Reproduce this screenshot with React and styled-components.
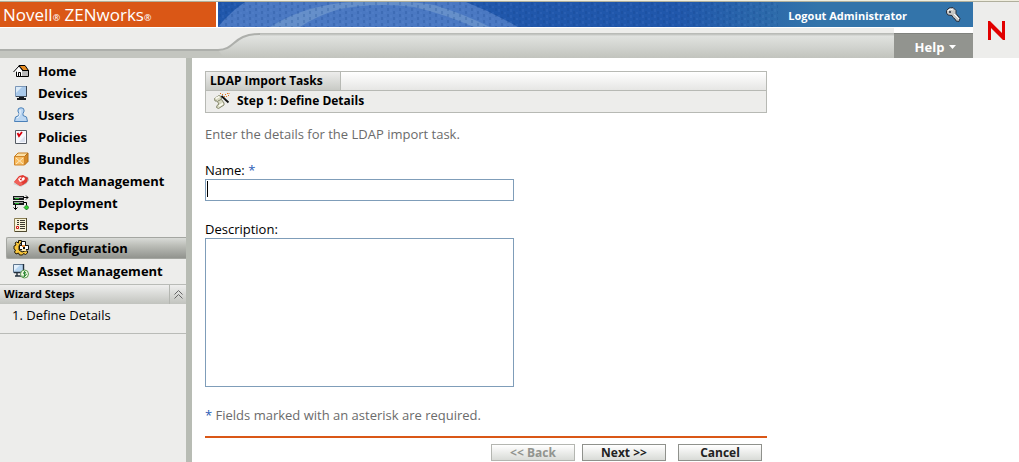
import React from "react";
import { useState } from "react";
import styled, { createGlobalStyle } from "styled-components";

const HomeIcon = () => (
  <Icon viewBox="0 0 16 16">
    <path d="M3.500 7.500h12v6h-12z" fill="#fff" stroke="#000" />
    <path d="M9 8h6v5H9z" fill="#b9b9b9" />
    <path d="M6 2.500h6l3.500 5H10z" fill="#e68a1e" stroke="#000" />
    <path d="M.500 9L6 3l4 5" fill="#fff" stroke="#000" />
    <path d="M5.500 9.500h2v4h-2z" fill="#fff" stroke="#000" />
  </Icon>
);

const DeviceIcon = () => (
  <Icon viewBox="0 0 16 16">
    <path d="M2.500 1.500h11v10h-11z" fill="#a9c9ea" stroke="#7b97b8" />
    <path d="M3 2h6L3 8z" fill="#dcebf8" />
    <path d="M13.500 1v10.500H3" fill="none" stroke="#3b4653" />
    <path d="M6 12h5v1h2v2H4v-2h2z" fill="#15191f" />
  </Icon>
);

const UserIcon = () => (
  <Icon viewBox="0 0 16 16">
    <path d="M5.500 1.500Q8 0 10.500 1.500Q12 4 10 6.500v2l3.500 1.500 1 4.500h-13L2.500 10 6 8.500v-2Q4 4 5.500 1.500z" fill="#bcd7f2" stroke="#4a80b8" />
    <path d="M7 3v4L6 9.500 4 11" fill="none" stroke="#f3f9ff" />
  </Icon>
);

const PolicyIcon = () => (
  <Icon viewBox="0 0 16 16">
    <path d="M2.500 1.500h11v13h-11z" fill="#f7f8fc" stroke="#555b63" />
    <path d="M6 13l6-6v6z" fill="#dce2ef" />
    <path d="M4.500 4l1.500 3L9 3" fill="none" stroke="#d8000c" strokeWidth="1.800" />
  </Icon>
);

const BundleIcon = () => (
  <Icon viewBox="0 0 16 16">
    <path d="M1.500 5.500L5 2h10l-3.500 3.500z" fill="#fbe0a6" stroke="#c87e20" />
    <path d="M11.500 5.500L15 2v8.500L11.500 14z" fill="#d68a27" stroke="#b06c16" />
    <path d="M1.500 5.500h10v8.500h-10z" fill="#f8bd62" stroke="#d0852a" />
    <path d="M3 7l3.500 3L10 7M3 13l3.500-3 3.500 3" fill="none" stroke="#fdebc8" />
  </Icon>
);

const PatchIcon = () => (
  <Icon viewBox="0 0 16 16">
    <path d="M0 11l3-2 8 3-3 2z" fill="#d0d0d0" />
    <path d="M11 3l4 1 1 3-3 4-3 1z" fill="#b9b3b1" />
    <path d="M1 9l5-6 4-1 5 3-1 4-4 3-3 1z" fill="#e23a32" />
    <path d="M1 9l4-3 5 5-3 2z" fill="#f0625a" />
    <path d="M5 6l2-2 2 1 2-1 1 2-2 2-3 1z" fill="#fff" />
    <path d="M7 5.500l2 2M9 5.500l-2 1.500" stroke="#d91b16" />
  </Icon>
);

const DeployIcon = () => (
  <Icon viewBox="0 0 16 16">
    <path d="M0 1h11v4H0zM0 6h11v4H0z" fill="#15181a" />
    <path d="M1 2.500h9M1 7.500h9" stroke="#a5aaa7" />
    <path d="M2 3.500h4M2 8.500h4" stroke="#24b32d" />
    <path d="M11 2.500h4M13 .500l2 2-2 2M11 7.500h2.500V10M2.500 10v4.500M.500 12.500l2 2 2-2" fill="none" stroke="#000" />
    <path d="M13.500 10l2.500 2.500-2.500 2.500-2.500-2.500z" fill="#31d334" stroke="#07570a" strokeWidth="0.7" />
  </Icon>
);

const ReportIcon = () => (
  <Icon viewBox="0 0 16 16">
    <path d="M1.500 1.500h12v13h-12z" fill="#f7f3d9" stroke="#8a7e52" />
    <path d="M13.500 1v13.500H2" fill="none" stroke="#4e482f" />
    <path d="M4 3.500h2M4 5.500h2M4 7.500h2M7 3.500h5M7 5.500h5M7 7.500h5M7 9.500h5M7 11.500h5" stroke="#3d3a31" />
    <path d="M3.500 9.500h2v2h-2z" fill="#fff" stroke="#d11515" />
  </Icon>
);

const ConfigIcon = () => (
  <Icon viewBox="0 0 16 16">
    <path d="M5.500.500h3v2H8L6 6v4l3 2 3-1h2.500v2l-2 1.500-2-1-1 1.500h-3l-1-2-2.500 1-1.500-2 1-2-1.500-1V6L3 5 2 3l1.500-1 2 1z" fill="#f8c63d" stroke="#241b06" />
    <path d="M8.500 1.500h4v4h-4zM11.500 5.500h4v4h-4z" fill="#fff" stroke="#111" />
    <path d="M6.500 5.500h4v4h-4z" fill="#fff" stroke="#111" />
    <path d="M9 5h3v2H9z" fill="#e8903a" />
    <path d="M9 9h4v2H9z" fill="#fbe6a8" />
  </Icon>
);

const AssetIcon = () => (
  <Icon viewBox="0 0 16 16">
    <path d="M.500 1.500h10v8H.500z" fill="#b6d5f1" stroke="#60768d" />
    <path d="M1 2h6L1 8z" fill="#e3f0fb" />
    <path d="M10.500 1v8.500H1M4 10v3H2M4 13h4" fill="none" stroke="#222f3c" strokeWidth="1.400" />
    <circle cx="11.500" cy="11" r="4" fill="#f1f8e4" stroke="#5b9a50" />
    <path d="M13 9.500q-2.500-1-2.500.500t2 1-.500 2-2-.500M11.500 8v6" fill="none" stroke="#2f8a37" />
  </Icon>
);

const WandIcon = () => (
  <Icon viewBox="0 0 16 16">
    <path d="M.500 5.500L5 2.500l2 1 .500 3 2.500 3.500v2L4.500 15.500l-2-1 .500-2 2-1.500L3 8H1z" fill="#d9dac4" stroke="#85876c" />
    <path d="M1.500 5.500l4-2M5 13l4-2.500" stroke="#fbfbf0" strokeWidth="1.500" />
    <path d="M4 8l3-1.500" stroke="#85876c" />
    <path d="M7.500 3l7 6.500" stroke="#111" strokeWidth="1.800" />
    <path d="M6 .500h1M8 1.500h1M10 3.500h1M11 1.500h1M13 .500h1M15 0v1M12 3.500h1M14 2.500h1" stroke="#e9761b" />
  </Icon>
);

const KeyIcon = () => (
  <Icon viewBox="0 0 16 16">
    <path d="M1.500 3.500L4 1l4-.500 3 3v3l4 5-1 3-3-.500-1-2-2-1.500-1-2-4-.500-1.500-2z" fill="#c8c8c5" stroke="#273140" />
    <path d="M3 4l2-2 3 1M9 7l5 5" fill="none" stroke="#fff" />
    <path d="M4 4h2v2H4z" fill="#4a525e" />
  </Icon>
);

const navItems = [
  { name: "Home", icon: <HomeIcon /> },
  { name: "Devices", icon: <DeviceIcon /> },
  { name: "Users", icon: <UserIcon /> },
  { name: "Policies", icon: <PolicyIcon /> },
  { name: "Bundles", icon: <BundleIcon /> },
  { name: "Patch Management", icon: <PatchIcon /> },
  { name: "Deployment", icon: <DeployIcon /> },
  { name: "Reports", icon: <ReportIcon /> },
  { name: "Configuration", icon: <ConfigIcon /> },
  { name: "Asset Management", icon: <AssetIcon /> },
];

const App = () => {
  const [name, setName] = useState("");
  const [description, setDescription] = useState("");
  const [selected, setSelected] = useState("Configuration");
  const [open, setOpen] = useState(true);

  return (
    <Page>
      <GlobalStyle />
      <Header>
        <HeaderMain>
          <Banner>
            <Brand>
              Novell<Mark>®</Mark> ZENworks<Mark>®</Mark>
            </Brand>
            <BlueBar>
              <BannerArt viewBox="0 0 560 25">
                <defs>
                  <pattern id="weave" width="12" height="6" patternUnits="userSpaceOnUse">
                    <path d="M2 0v3M8 3v3" stroke="#123f86" strokeWidth="2" opacity="0.22" />
                    <path d="M5 1v3M11 4v2" stroke="#6f9be0" strokeWidth="1" opacity="0.2" />
                  </pattern>
                </defs>
                <path d="M0 25Q12 10 27 0H248Q274 10 300 25z" fill="#4a78c2" />
                <path d="M52 25Q82 6 122 1Q175 -4 216 3Q246 12 272 25H256Q226 12 196 5Q158 0 122 7Q98 14 82 25z" fill="#658fc9" />
                <rect width="560" height="25" fill="url(#weave)" />
              </BannerArt>
              <LogoutLink href="#logout">Logout Administrator</LogoutLink>
              <KeyButton aria-label="Change password">
                <KeyIcon />
              </KeyButton>
            </BlueBar>
          </Banner>
          <SubBar>
            <CurveArt viewBox="0 0 260 30">
              <defs>
                <linearGradient id="silver" x1="0" y1="0" x2="0" y2="1">
                  <stop offset="0.1" stopColor="#e0e2df" />
                  <stop offset="0.4" stopColor="#d7d9d5" />
                  <stop offset="1" stopColor="#c1c3bd" />
                </linearGradient>
              </defs>
              <rect width="260" height="30" fill="#ededeb" />
              <path d="M0 22H218C236 22 232 6 260 6V30H0z" fill="url(#silver)" />
              <path d="M0 22H218L224 30H0z" fill="#c3c5bf" />
              <path d="M0 22H218C236 22 232 6 260 6" fill="none" stroke="#adafab" strokeWidth="2" />
            </CurveArt>
            <SilverBar />
            <HelpButton>
              Help
              <Caret viewBox="0 0 7 4">
                <path d="M0 0h7L3.500 4z" fill="#fff" />
              </Caret>
            </HelpButton>
          </SubBar>
        </HeaderMain>
        <LogoBox>
          <Logo viewBox="0 0 17 19" role="img" aria-label="Novell">
            <path d="M0 0h2l12 12V0h3v19h-2L3 7v12H0z" fill="#e10000" />
          </Logo>
        </LogoBox>
      </Header>
      <Body>
        <Sidebar>
          <NavList>
            {navItems.map((item) => (
              <li key={item.name}>
                <NavLink
                  href={"#" + item.name}
                  $active={selected === item.name}
                  onClick={() => setSelected(item.name)}
                >
                  {item.icon}
                  {item.name}
                </NavLink>
              </li>
            ))}
          </NavList>
          <StepsHeader>
            <StepsTitle>Wizard Steps</StepsTitle>
            <CollapseButton aria-label="Collapse" onClick={() => setOpen(!open)}>
              <Chevrons viewBox="0 0 9 9">
                <path d="M.500 4.500l4-4 4 4M.500 8.500l4-4 4 4" fill="none" stroke="#666" />
              </Chevrons>
            </CollapseButton>
          </StepsHeader>
          {open && <StepsBody>1. Define Details</StepsBody>}
        </Sidebar>
        <Main>
          <Content>
            <TitleBox>
              <TitleRow>
                <Title>LDAP Import Tasks</Title>
              </TitleRow>
              <StepRow>
                <WandIcon />
                <Step>Step 1: Define Details</Step>
              </StepRow>
            </TitleBox>
            <Intro>Enter the details for the LDAP import task.</Intro>
            <Label htmlFor="name">
              Name: <Star>*</Star>
            </Label>
            <NameInput
              id="name"
              autoFocus
              $empty={name === ""}
              value={name}
              onChange={(e) => setName(e.target.value)}
            />
            <Label htmlFor="description">Description:</Label>
            <DescriptionInput
              id="description"
              value={description}
              onChange={(e) => setDescription(e.target.value)}
            />
            <Note>
              <Star>*</Star> Fields marked with an asterisk are required.
            </Note>
            <ButtonRow>
              <WizardButton disabled>&lt;&lt; Back</WizardButton>
              <WizardButton>Next &gt;&gt;</WizardButton>
              <CancelButton>Cancel</CancelButton>
            </ButtonRow>
          </Content>
        </Main>
      </Body>
    </Page>
  );
};

const GlobalStyle = createGlobalStyle`
  * {
    box-sizing: border-box;
  }
  body {
    margin: 0;
    background-color: #fff;
  }
  button, input, textarea {
    font-family: inherit;
  }
`;

const Page = styled.div`
  display: flex;
  flex-direction: column;
  min-height: 100vh;
  font-family: "Open Sans", "Noto Sans", sans-serif;
  font-size: 13px;
  line-height: 16px;
  color: #000;
`;
const Header = styled.header`
  display: flex;
  border-top: 1px solid #f0eedf;
`;
const HeaderMain = styled.div`
  flex: 1;
  min-width: 0;
  border-top: 1px solid #b0af9c;
`;
const Banner = styled.div`
  display: flex;
  height: 26px;
  border-bottom: 1px solid #fff;
`;
const Brand = styled.div`
  width: 218px;
  padding-left: 3px;
  border-right: 2px solid #fff;
  background-color: #da5716;
  color: #fff;
  font-size: 17px;
  line-height: 25px;
  white-space: nowrap;
`;
const Mark = styled.span`
  font-size: 9px;
`;
const BlueBar = styled.div`
  position: relative;
  flex: 1;
  display: flex;
  align-items: center;
  justify-content: flex-end;
  padding-right: 12px;
  overflow: hidden;
  background: linear-gradient(to right, #2057ab 0, #2057ab 460px, #3374aa 600px);
`;
const BannerArt = styled.svg`
  position: absolute;
  top: 0;
  left: 0;
  width: 560px;
  height: 25px;
`;
const LogoutLink = styled.a`
  position: relative;
  margin-top: 3px;
  color: #fff;
  font-size: 11px;
  font-weight: 700;
  text-decoration: none;
`;
const KeyButton = styled.button`
  display: flex;
  margin-left: 38px;
  padding: 0;
  border: 0;
  background: none;
`;
const SubBar = styled.div`
  display: flex;
  height: 30px;
`;
const CurveArt = styled.svg`
  width: 260px;
  height: 30px;
`;
const SilverBar = styled.div`
  flex: 1;
  background: linear-gradient(
    #ededeb 5px,
    #b4b6b2 5px,
    #c8cac7 7px,
    #e0e2df 8px,
    #d7d9d5 15px,
    #c1c3bd 30px
  );
`;
const HelpButton = styled.button`
  display: flex;
  align-items: center;
  justify-content: center;
  gap: 5px;
  width: 79px;
  margin-top: 5px;
  padding: 2px 0 0 4px;
  border: 0;
  border-top: 1px solid #80827e;
  background-color: #92948f;
  color: #fff;
  font-size: 13px;
  font-weight: 700;
`;
const Caret = styled.svg`
  width: 7px;
  height: 4px;
`;
const LogoBox = styled.div`
  display: flex;
  align-items: center;
  justify-content: center;
  width: 46px;
  border-top: 1px solid #b0af9c;
  background-color: #ededeb;
`;
const Logo = styled.svg`
  width: 17px;
  height: 19px;
`;
const Icon = styled.svg`
  position: relative;
  flex: none;
  width: 16px;
  height: 16px;
`;
const Body = styled.div`
  flex: 1;
  display: flex;
`;
const Sidebar = styled.nav`
  width: 192px;
  padding-top: 2px;
  border-right: 6px solid #b8bcb4;
  background-color: #ededeb;
`;
const NavList = styled.ul`
  margin: 0;
  padding: 0 0 2px 6px;
  list-style: none;
`;
const NavLink = styled.a`
  display: flex;
  align-items: center;
  gap: 9px;
  height: 22px;
  padding-left: ${(props) => (props.$active ? "6px" : "7px")};
  border: ${(props) => (props.$active ? "1px solid #a4a6a1" : "0")};
  border-right: 0;
  border-radius: 2px 0 0 2px;
  margin: ${(props) => (props.$active ? "1px 0" : "0")};
  background: ${(props) =>
    props.$active ? "linear-gradient(#d9dbd7, #babcb6 40%, #91938e)" : "none"};
  color: #000;
  font-size: 13px;
  font-weight: 700;
  text-decoration: none;
  white-space: nowrap;
`;
const StepsHeader = styled.div`
  display: flex;
  height: 20px;
  border-top: 1px solid #b9bbb7;
  background: linear-gradient(#efefee, #c1c3be);
`;
const StepsTitle = styled.div`
  flex: 1;
  padding-left: 4px;
  font-size: 11px;
  font-weight: 700;
  line-height: 18px;
`;
const CollapseButton = styled.button`
  display: flex;
  align-items: center;
  justify-content: center;
  width: 17px;
  padding: 0;
  border: 0;
  border-left: 1px solid #b4b6b1;
  background: none;
`;
const Chevrons = styled.svg`
  width: 9px;
  height: 9px;
`;
const StepsBody = styled.div`
  padding: 3px 12px 10px;
  border-bottom: 1px solid #b9bbb7;
`;
const Main = styled.main`
  flex: 1;
  padding: 13px 13px 0;
`;
const Content = styled.div`
  max-width: 562px;
`;
const TitleBox = styled.div`
  border: 1px solid #b7b9b4;
  background-color: #ededeb;
`;
const TitleRow = styled.div`
  display: flex;
  height: 19px;
  border-bottom: 1px solid #b7b9b4;
  background: linear-gradient(#fff, #e6e6e4);
`;
const Title = styled.h1`
  margin: 0;
  padding: 0 17px 0 4px;
  border-right: 1px solid #b7b9b4;
  background: linear-gradient(#ededec, #c8cac5);
  font-size: 12px;
  line-height: 18px;
`;
const StepRow = styled.div`
  display: flex;
  align-items: center;
  gap: 7px;
  height: 21px;
  padding: 0 0 2px 8px;
`;
const Step = styled.h2`
  margin: 0;
  font-size: 12px;
`;
const Intro = styled.p`
  margin: 13px 0 20px;
  color: #6b6b6b;
`;
const Label = styled.label`
  display: block;
  margin-bottom: 1px;
`;
const Star = styled.span`
  color: #2a5cb5;
`;
const NameInput = styled.input`
  display: block;
  width: 309px;
  height: 22px;
  margin-bottom: 20px;
  padding: 1px;
  border: 1px solid #7f9db9;
  outline: none;
  font-size: 13px;
  &:focus {
    caret-color: ${(props) => (props.$empty ? "transparent" : "#000")};
    background: ${(props) =>
      props.$empty
        ? "linear-gradient(#000, #000) 1px 1px / 1px 16px no-repeat #fff"
        : "#fff"};
  }
`;
const DescriptionInput = styled.textarea`
  display: block;
  width: 309px;
  height: 149px;
  margin: 0 0 20px;
  padding: 2px;
  border: 1px solid #7f9db9;
  outline: none;
  resize: none;
  font-size: 13px;
`;
const Note = styled.p`
  margin: 0 0 13px;
  color: #6b6b6b;
`;
const ButtonRow = styled.div`
  display: flex;
  justify-content: flex-end;
  gap: 7px;
  padding: 6px 5px 0 0;
  border-top: 2px solid #da5716;
`;
const WizardButton = styled.button`
  width: 84px;
  height: 17px;
  padding: 0;
  border: 1px solid #8f918c;
  background: linear-gradient(#fff, #d9dbd7);
  color: #222;
  font-size: 12px;
  font-weight: 700;
  line-height: 14px;
  &:disabled {
    border-color: #b4b6b1;
    color: #92948f;
  }
`;
const CancelButton = styled(WizardButton)`
  margin-left: 5px;
`;

export default App;
